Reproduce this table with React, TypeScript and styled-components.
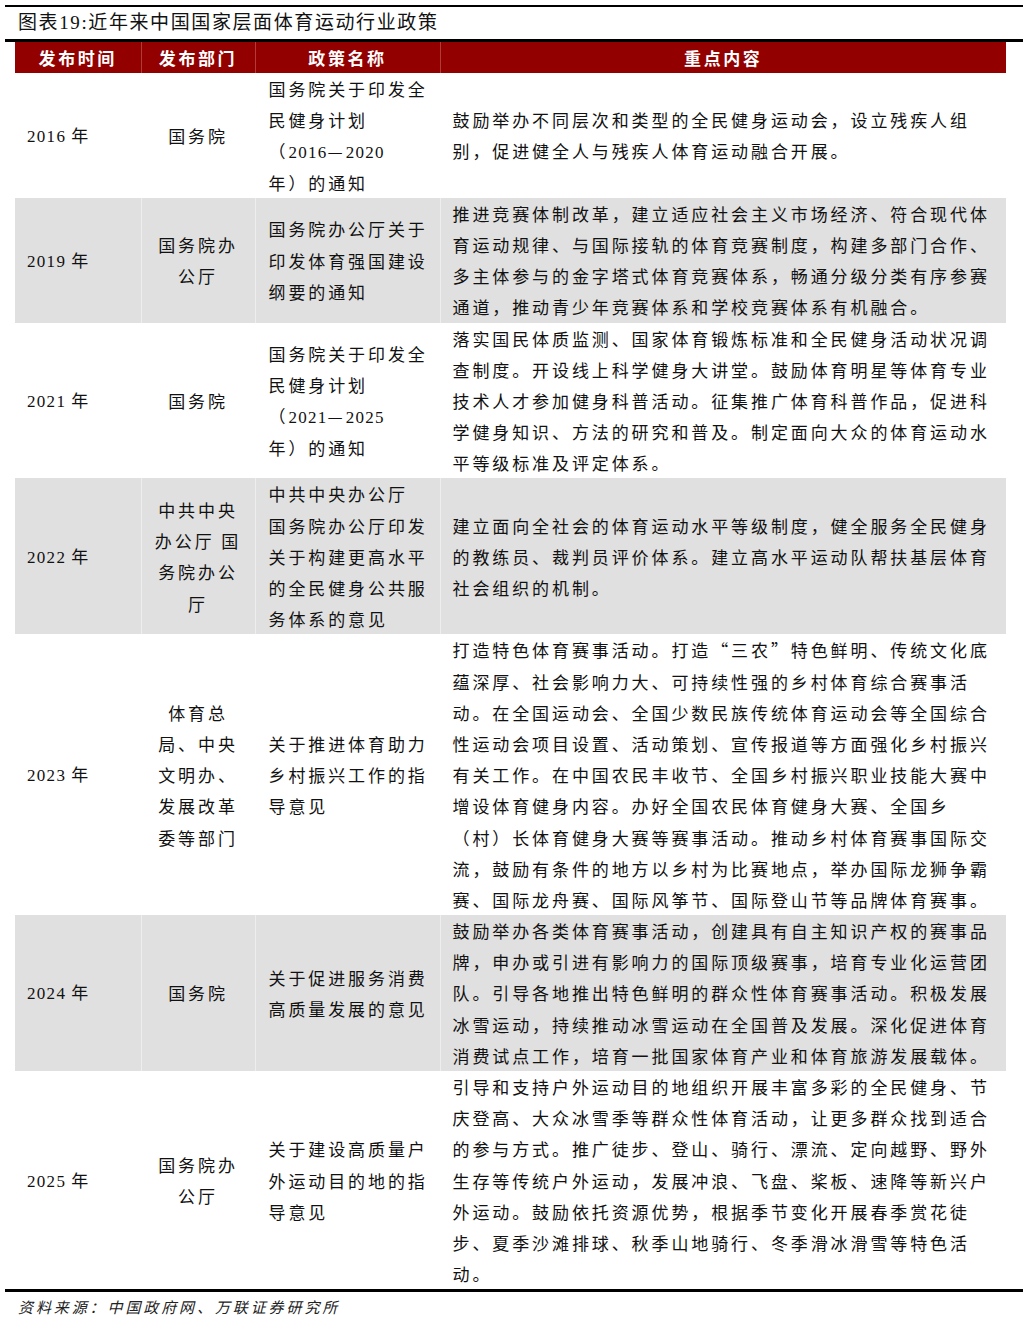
import React from "react";
import styled, { createGlobalStyle } from "styled-components";

const GlobalStyle = createGlobalStyle`
  body {
    margin: 0;
    background: #ffffff;
    color: #111111;
    font-family: "Liberation Serif", "Noto Sans CJK SC", serif;
  }
`;

const Page = styled.div`
  width: 1029px;
  box-sizing: border-box;
  padding: 5px 6px 0 5px;
`;

const Rule = styled.div<{ $thick?: boolean }>`
  height: ${(p) => (p.$thick ? 3 : 2)}px;
  background: #000000;
`;

const Title = styled.div`
  height: 32px;
  line-height: 32px;
  padding-left: 13px;
  font-size: 19px;
  letter-spacing: 1.6px;
  color: #111111;
`;

const TableWrap = styled.div`
  margin: 0 17px 0 10px;
`;

const Table = styled.table`
  width: 100%;
  border-collapse: collapse;
  border-spacing: 0;
  table-layout: fixed;
`;

const HeadCell = styled.th`
  height: 31px;
  padding: 0;
  background: #930000;
  color: #ffffff;
  font-family: "Noto Sans CJK SC", sans-serif;
  font-size: 17px;
  font-weight: 700;
  letter-spacing: 2.6px;
  text-align: center;
  vertical-align: middle;
  & + & {
    border-left: 1px solid #b23a3a;
  }
`;

const Row = styled.tr<{ $shaded: boolean }>`
  background: ${(p) => (p.$shaded ? "#e0e0e0" : "#ffffff")};
`;

const Cell = styled.td<{ $align?: "left" | "center"; $pad?: number }>`
  padding: 0 0 0 ${(p) => p.$pad ?? 0}px;
  vertical-align: middle;
  text-align: ${(p) => p.$align ?? "left"};
  font-family: "Noto Sans CJK SC", sans-serif;
  font-size: 17px;
  line-height: 31.2px;
  letter-spacing: 2.9px;
  color: #111111;
  & + & {
    border-left: 1px solid rgba(255, 255, 255, 0.45);
  }
`;

const YearCell = styled(Cell)`
  letter-spacing: 1.3px;
`;

const Line = styled.div`
  white-space: nowrap;
  height: 31.2px;
`;

const Num = styled.span`
  font-family: "Liberation Serif", serif;
  letter-spacing: 1.3px;
`;

const Source = styled.div`
  height: 29px;
  line-height: 29px;
  padding-left: 13px;
  font-family: "Noto Sans CJK SC", sans-serif;
  font-size: 15px;
  font-style: italic;
  letter-spacing: 2.9px;
  color: #222222;
`;

type Policy = {
  year: string;
  dept: string[];
  name: string[];
  content: string[];
};

const policies: Policy[] = [
  {
    year: "2016",
    dept: ["国务院"],
    name: ["国务院关于印发全", "民健身计划", "（2016—2020", "年）的通知"],
    content: [
      "鼓励举办不同层次和类型的全民健身运动会，设立残疾人组",
      "别，促进健全人与残疾人体育运动融合开展。",
    ],
  },
  {
    year: "2019",
    dept: ["国务院办", "公厅"],
    name: ["国务院办公厅关于", "印发体育强国建设", "纲要的通知"],
    content: [
      "推进竞赛体制改革，建立适应社会主义市场经济、符合现代体",
      "育运动规律、与国际接轨的体育竞赛制度，构建多部门合作、",
      "多主体参与的金字塔式体育竞赛体系，畅通分级分类有序参赛",
      "通道，推动青少年竞赛体系和学校竞赛体系有机融合。",
    ],
  },
  {
    year: "2021",
    dept: ["国务院"],
    name: ["国务院关于印发全", "民健身计划", "（2021—2025", "年）的通知"],
    content: [
      "落实国民体质监测、国家体育锻炼标准和全民健身活动状况调",
      "查制度。开设线上科学健身大讲堂。鼓励体育明星等体育专业",
      "技术人才参加健身科普活动。征集推广体育科普作品，促进科",
      "学健身知识、方法的研究和普及。制定面向大众的体育运动水",
      "平等级标准及评定体系。",
    ],
  },
  {
    year: "2022",
    dept: ["中共中央", "办公厅 国", "务院办公", "厅"],
    name: [
      "中共中央办公厅",
      "国务院办公厅印发",
      "关于构建更高水平",
      "的全民健身公共服",
      "务体系的意见",
    ],
    content: [
      "建立面向全社会的体育运动水平等级制度，健全服务全民健身",
      "的教练员、裁判员评价体系。建立高水平运动队帮扶基层体育",
      "社会组织的机制。",
    ],
  },
  {
    year: "2023",
    dept: ["体育总", "局、中央", "文明办、", "发展改革", "委等部门"],
    name: ["关于推进体育助力", "乡村振兴工作的指", "导意见"],
    content: [
      "打造特色体育赛事活动。打造“三农”特色鲜明、传统文化底",
      "蕴深厚、社会影响力大、可持续性强的乡村体育综合赛事活",
      "动。在全国运动会、全国少数民族传统体育运动会等全国综合",
      "性运动会项目设置、活动策划、宣传报道等方面强化乡村振兴",
      "有关工作。在中国农民丰收节、全国乡村振兴职业技能大赛中",
      "增设体育健身内容。办好全国农民体育健身大赛、全国乡",
      "（村）长体育健身大赛等赛事活动。推动乡村体育赛事国际交",
      "流，鼓励有条件的地方以乡村为比赛地点，举办国际龙狮争霸",
      "赛、国际龙舟赛、国际风筝节、国际登山节等品牌体育赛事。",
    ],
  },
  {
    year: "2024",
    dept: ["国务院"],
    name: ["关于促进服务消费", "高质量发展的意见"],
    content: [
      "鼓励举办各类体育赛事活动，创建具有自主知识产权的赛事品",
      "牌，申办或引进有影响力的国际顶级赛事，培育专业化运营团",
      "队。引导各地推出特色鲜明的群众性体育赛事活动。积极发展",
      "冰雪运动，持续推动冰雪运动在全国普及发展。深化促进体育",
      "消费试点工作，培育一批国家体育产业和体育旅游发展载体。",
    ],
  },
  {
    year: "2025",
    dept: ["国务院办", "公厅"],
    name: ["关于建设高质量户", "外运动目的地的指", "导意见"],
    content: [
      "引导和支持户外运动目的地组织开展丰富多彩的全民健身、节",
      "庆登高、大众冰雪季等群众性体育活动，让更多群众找到适合",
      "的参与方式。推广徒步、登山、骑行、漂流、定向越野、野外",
      "生存等传统户外运动，发展冲浪、飞盘、桨板、速降等新兴户",
      "外运动。鼓励依托资源优势，根据季节变化开展春季赏花徒",
      "步、夏季沙滩排球、秋季山地骑行、冬季滑冰滑雪等特色活",
      "动。",
    ],
  },
];

// digits go through the Latin serif, everything else stays in the CJK face
const withNums = (text: string) =>
  text.split(/(\d+)/).map((part, i) =>
    /^\d+$/.test(part) ? <Num key={i}>{part}</Num> : <React.Fragment key={i}>{part}</React.Fragment>
  );

const Lines: React.FC<{ lines: string[] }> = ({ lines }) => (
  <>
    {lines.map((l, i) => (
      <Line key={i}>{withNums(l)}</Line>
    ))}
  </>
);

const App: React.FC = () => (
  <Page>
    <GlobalStyle />
    <Rule />
    <Title>图表19:近年来中国国家层面体育运动行业政策</Title>
    <Rule $thick />
    <TableWrap>
      <Table>
        <colgroup>
          <col style={{ width: 126 }} />
          <col style={{ width: 114 }} />
          <col style={{ width: 185 }} />
          <col style={{ width: 566 }} />
        </colgroup>
        <thead>
          <tr>
            <HeadCell>发布时间</HeadCell>
            <HeadCell>发布部门</HeadCell>
            <HeadCell>政策名称</HeadCell>
            <HeadCell>重点内容</HeadCell>
          </tr>
        </thead>
        <tbody>
          {policies.map((p, i) => (
            <Row key={p.year} $shaded={i % 2 === 1}>
              <YearCell $pad={12}>
                <Num>{p.year}</Num> 年
              </YearCell>
              <Cell $align="center">
                <Lines lines={p.dept} />
              </Cell>
              <Cell $pad={13}>
                <Lines lines={p.name} />
              </Cell>
              <Cell $pad={12}>
                <Lines lines={p.content} />
              </Cell>
            </Row>
          ))}
        </tbody>
      </Table>
    </TableWrap>
    <Rule $thick />
    <Source>资料来源：中国政府网、万联证券研究所</Source>
  </Page>
);

export default App;
